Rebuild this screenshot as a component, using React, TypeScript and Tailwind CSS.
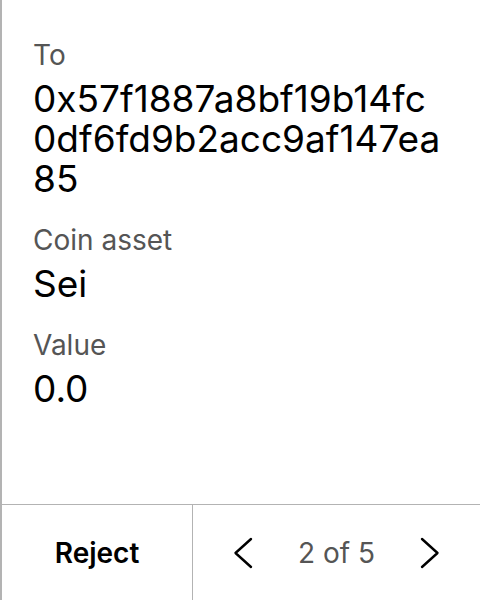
import React from 'react';

const Field: React.FC<{ label: string; value: string }> = ({ label, value }) => (
  <div className="flex flex-col gap-[7px]">
    <span className="text-[28px] leading-[34px] text-[#555555]">{label}</span>
    <span className="text-[37px] leading-[40px] text-black break-all">{value}</span>
  </div>
);

const Chevron: React.FC<{ dir: 'left' | 'right' }> = ({ dir }) => (
  <svg width="20" height="32" viewBox="0 0 20 32" fill="none" stroke="black" strokeWidth="2.4" strokeLinecap="round" strokeLinejoin="round">
    {dir === 'left' ? <path d="M18 2 L2.5 16 L18 30" /> : <path d="M2 2 L17.5 16 L2 30" />}
  </svg>
);

export default function App() {
  return (
    <div className="w-[480px] h-[600px] flex flex-col bg-white border-l-2 border-[#b3b3b3] font-['Inter',sans-serif]">
      <div className="flex-1 flex flex-col gap-[24px] pl-[31px] pr-[33px] pt-[38px]">
        <Field label="To" value="0x57f1887a8bf19b14fc0df6fd9b2acc9af147ea85" />
        <Field label="Coin asset" value="Sei" />
        <Field label="Value" value="0.0" />
      </div>
      <div className="h-[96px] flex border-t-[1.5px] border-[#b3b3b3]">
        <div className="w-[191px] flex items-center justify-center border-r-[1.5px] border-[#b3b3b3]">
          <span className="text-[28px] font-semibold text-black">Reject</span>
        </div>
        <div className="flex-1 flex items-center justify-center gap-[45px]">
          <Chevron dir="left" />
          <span className="text-[28px] text-[#555555]">2 of 5</span>
          <Chevron dir="right" />
        </div>
      </div>
    </div>
  );
}
